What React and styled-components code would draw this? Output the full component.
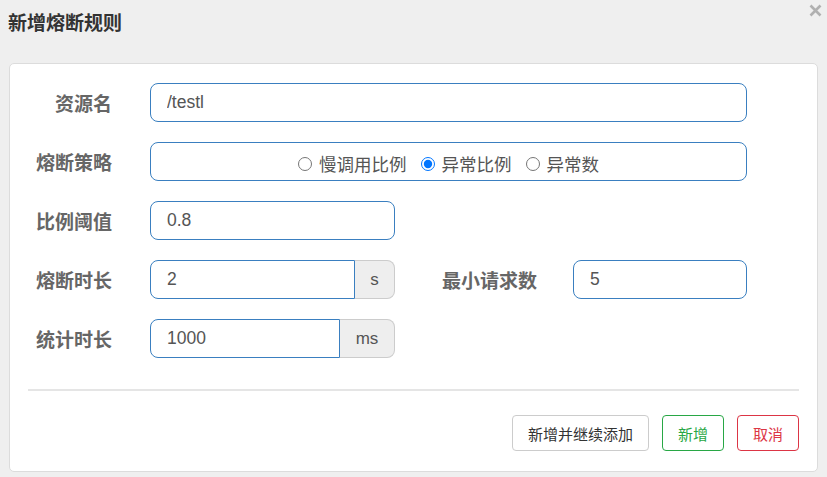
import React from "react";
import styled, { createGlobalStyle } from "styled-components";

const Global = createGlobalStyle`
  html, body { margin: 0; padding: 0; background: #efefef; }
  body { font-family: "Liberation Sans", Arial, "Noto Sans CJK SC", sans-serif; }
  * { box-sizing: border-box; }
`;

const Page = styled.div`
  width: 827px;
  height: 477px;
  background: #efefef;
  display: flex;
  flex-direction: column;
`;

const Header = styled.div`
  height: 63px;
  display: flex;
  justify-content: space-between;
  align-items: flex-start;
  padding: 10px 5px 0 8px;
`;

const Title = styled.h3`
  margin: 0;
  font-family: "Noto Sans CJK SC", sans-serif;
  font-weight: 700;
  font-size: 19px;
  line-height: 24px;
  color: #333;
`;

const Close = styled.button`
  margin-top: -7px;
  padding: 0;
  border: 0;
  background: transparent;
  width: 14px;
  height: 14px;
  display: flex;
  align-items: center;
  justify-content: center;
  cursor: pointer;
`;

const Card = styled.div`
  margin: 0 9px;
  height: 409px;
  background: #fff;
  border: 1px solid #dcdcdc;
  border-radius: 5px;
  padding: 19px 18px 19px 18px;
  display: flex;
  flex-direction: column;
`;

const Form = styled.div`
  display: flex;
  flex-direction: column;
  gap: 20px;
`;

const Row = styled.div`
  display: flex;
  align-items: center;
  height: 39px;
`;

const Label = styled.label`
  width: ${(p) => p.$w || 84}px;
  margin-right: ${(p) => p.$mr || 38}px;
  text-align: right;
  font-family: "Noto Sans CJK SC", sans-serif;
  font-weight: 700;
  font-size: 19px;
  color: #666;
  flex: none;
`;

const Input = styled.input`
  width: ${(p) => p.$w}px;
  height: 39px;
  flex: none;
  border: 1px solid #3a7fc0;
  border-radius: ${(p) => (p.$grouped ? "8px 0 0 8px" : "8px")};
  padding: 0 16px;
  font-family: "Liberation Sans", Arial, sans-serif;
  font-size: 17.5px;
  color: #555;
  outline: none;
  background: #fff;
`;

const Group = styled.div`
  display: flex;
  width: 245px;
  flex: none;
`;

const Addon = styled.span`
  flex: 1;
  height: 39px;
  display: flex;
  align-items: center;
  justify-content: center;
  background: #eee;
  border: 1px solid #ccc;
  border-left: 0;
  border-radius: 0 8px 8px 0;
  font-family: "Liberation Sans", Arial, sans-serif;
  font-size: 17px;
  color: #555;
`;

const RadioBox = styled.div`
  width: 597px;
  height: 39px;
  border: 1px solid #3a7fc0;
  border-radius: 8px;
  display: flex;
  align-items: center;
  justify-content: center;
  gap: 14px;
  padding-top: 4px;
`;

const RadioOption = styled.label`
  display: flex;
  align-items: center;
  gap: 7px;
  font-family: "Noto Sans CJK SC", sans-serif;
  font-size: 17.5px;
  color: #555;
  cursor: pointer;

  input {
    margin: 0;
    width: 14px;
    height: 14px;
    accent-color: #0075ff;
  }
`;

const Divider = styled.hr`
  margin: 31px 0 24px 0;
  border: 0;
  border-top: 2px solid #e5e5e5;
`;

const Footer = styled.div`
  display: flex;
  justify-content: flex-end;
  gap: 13px;
`;

const Button = styled.button`
  height: 36px;
  padding: 0 15px;
  background: #fff;
  border: 1px solid ${(p) => p.$border};
  border-radius: 4px;
  color: ${(p) => p.$color};
  font-family: "Noto Sans CJK SC", sans-serif;
  font-size: 15px;
  cursor: pointer;
`;

export default function App() {
  return (
    <Page>
      <Global />
      <Header>
        <Title>新增熔断规则</Title>
        <Close aria-label="close">
          <svg width="13" height="13" viewBox="0 0 13 13">
            <path d="M1.5 1.5 L11.5 11.5 M11.5 1.5 L1.5 11.5" stroke="#b0b0b0" strokeWidth="2.6" strokeLinecap="butt" />
          </svg>
        </Close>
      </Header>
      <Card>
        <Form>
          <Row>
            <Label>资源名</Label>
            <Input $w={597} defaultValue="/testl" />
          </Row>
          <Row>
            <Label>熔断策略</Label>
            <RadioBox>
              <RadioOption>
                <input type="radio" name="grade" />
                慢调用比例
              </RadioOption>
              <RadioOption>
                <input type="radio" name="grade" defaultChecked />
                异常比例
              </RadioOption>
              <RadioOption>
                <input type="radio" name="grade" />
                异常数
              </RadioOption>
            </RadioBox>
          </Row>
          <Row>
            <Label>比例阈值</Label>
            <Input $w={245} defaultValue="0.8" />
          </Row>
          <Row>
            <Label>熔断时长</Label>
            <Group>
              <Input $w={205} $grouped defaultValue="2" />
              <Addon>s</Addon>
            </Group>
            <Label $w={142} $mr={36}>最小请求数</Label>
            <Input $w={174} defaultValue="5" />
          </Row>
          <Row>
            <Label>统计时长</Label>
            <Group>
              <Input $w={190} $grouped defaultValue="1000" />
              <Addon>ms</Addon>
            </Group>
          </Row>
        </Form>
        <Divider />
        <Footer>
          <Button $border="#ccc" $color="#333">新增并继续添加</Button>
          <Button $border="#28a745" $color="#28a745">新增</Button>
          <Button $border="#dc3545" $color="#dc3545">取消</Button>
        </Footer>
      </Card>
    </Page>
  );
}
